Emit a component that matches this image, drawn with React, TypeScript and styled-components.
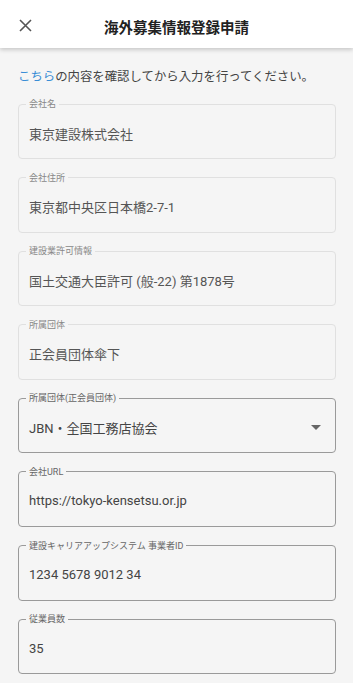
import React from 'react'
import styled, { createGlobalStyle } from 'styled-components'

const GlobalStyle = createGlobalStyle`
    html, body {
        margin: 0;
        padding: 0;
        background: #f5f5f5;
        font-family: Roboto, "Noto Sans CJK JP", sans-serif;
    }
`

const fields = [
    { label: '会社名', value: '東京建設株式会社', disabled: true },
    { label: '会社住所', value: '東京都中央区日本橋2-7-1', disabled: true },
    { label: '建設業許可情報', value: '国土交通大臣許可 (般-22) 第1878号', disabled: true },
    { label: '所属団体', value: '正会員団体傘下', disabled: true },
    { label: '所属団体(正会員団体)', value: 'JBN・全国工務店協会', select: true },
    { label: '会社URL', value: 'https://tokyo-kensetsu.or.jp' },
    { label: '建設キャリアアップシステム 事業者ID', value: '1234 5678 9012 34' },
    { label: '従業員数', value: '35' },
]

export default function App() {
    return (
        <Page>
            <GlobalStyle />
            <Header>
                <CloseButton aria-label="close">
                    <svg width="13" height="13" viewBox="0 0 13 13">
                        <path d="M1 1L12 12M12 1L1 12" stroke="#555" strokeWidth="1.6" fill="none" />
                    </svg>
                </CloseButton>
                <Title>海外募集情報登録申請</Title>
            </Header>
            <Content>
                <Intro>
                    <A>こちら</A>の内容を確認してから入力を行ってください。
                </Intro>
                <Form>
                    {fields.map((f) => (
                        <Field key={f.label} $disabled={f.disabled}>
                            <Legend $disabled={f.disabled}>{f.label}</Legend>
                            <Value $disabled={f.disabled}>
                                <span>{f.value}</span>
                                {f.select && (
                                    <svg width="10" height="5" viewBox="0 0 10 5">
                                        <path d="M0 0L10 0L5 5Z" fill="#666" />
                                    </svg>
                                )}
                            </Value>
                        </Field>
                    ))}
                </Form>
            </Content>
        </Page>
    )
}

const Page = styled.div`
    min-height: 683px;
    background: #f5f5f5;
`

const Header = styled.header`
    position: relative;
    height: 48px;
    background: #fff;
    display: flex;
    align-items: center;
    justify-content: center;
    box-shadow: 0 2px 4px rgba(0, 0, 0, 0.18);
`

const CloseButton = styled.button`
    position: absolute;
    left: 12px;
    top: 12px;
    width: 26px;
    height: 26px;
    border: none;
    background: none;
    padding: 0;
    display: flex;
    align-items: center;
    justify-content: center;
`

const Title = styled.h1`
    margin: 0;
    font-size: 14.5px;
    font-weight: 700;
    color: #222;
    padding-top: 5px;
`

const Content = styled.main`
    padding: 19px 17px 0 18px;
`

const Intro = styled.p`
    margin: 0;
    font-size: 12.4px;
    line-height: 20px;
    color: #444;
    white-space: nowrap;
`

const A = styled.span`
    color: #3a8ed6;
`

const Form = styled.div`
    display: flex;
    flex-direction: column;
    gap: 12.6px;
    margin-top: 11px;
`

const Field = styled.fieldset<{ $disabled?: boolean }>`
    margin: 0;
    padding: 0 10px 0 7px;
    border: 1px solid ${(p) => (p.$disabled ? '#e0e0e0' : '#9a9a9a')};
    border-radius: 4px;
    min-width: 0;
`

const Legend = styled.legend<{ $disabled?: boolean }>`
    padding: 0 3px;
    font-size: 9px;
    line-height: 12px;
    color: ${(p) => (p.$disabled ? '#888' : '#666')};
`

const Value = styled.div<{ $disabled?: boolean }>`
    height: 48px;
    padding: 0 0 2px 3px;
    box-sizing: border-box;
    display: flex;
    align-items: center;
    justify-content: space-between;
    font-size: 13px;
    color: ${(p) => (p.$disabled ? '#555' : '#444')};

    svg {
        margin-right: 4px;
    }
`
